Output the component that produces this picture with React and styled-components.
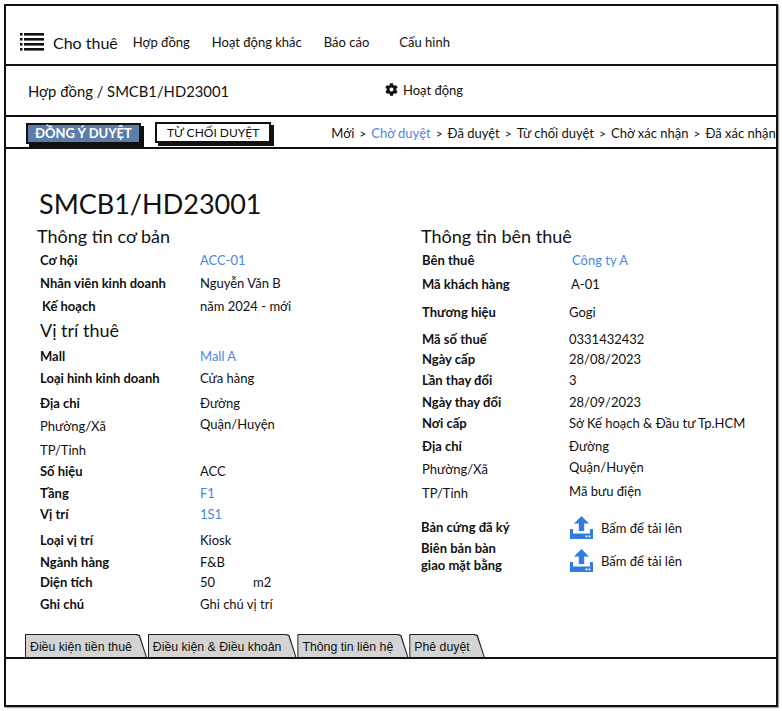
import styled, { createGlobalStyle } from 'styled-components';
import { FaCog } from 'react-icons/fa';

const GlobalStyle = createGlobalStyle`
  *, *::before, *::after { box-sizing: border-box; }
  body {
    margin: 0;
    background: #fff;
    color: #111;
    font-family: Lato, "Noto Sans", sans-serif;
  }
`;

const Frame = styled.div`
  margin: 4px;
  width: 774px;
  height: 703px;
  border: 2px solid #111;
  box-shadow: 1px 1px 1px rgba(0, 0, 0, 0.35);
  display: flex;
  flex-direction: column;
`;

// top menu
const NavBar = styled.nav`
  height: 60px;
  border-bottom: 2px solid #111;
  display: flex;
  align-items: center;
  padding: 14px 0 0 14px;
`;

const Brand = styled.div`
  display: flex;
  align-items: center;
  gap: 9px;
  font-size: 16px;
  margin-right: 15px;
`;

const NavLinks = styled.div`
  display: flex;
  gap: 22px;
  font-size: 13px;
`;

const NavLink = styled.span`
  margin-right: ${({ $extra }) => $extra || 0}px;
`;

// page title bar
const TitleBar = styled.div`
  height: 51px;
  border-bottom: 2px solid #111;
  display: grid;
  grid-template-columns: 357px auto;
  align-items: center;
  padding-left: 22px;
`;

const Crumb = styled.div`
  font-size: 14.8px;
`;

const Activity = styled.div`
  display: flex;
  align-items: center;
  gap: 5px;
  font-size: 13px;
  margin-top: -2px;
`;

// approve / reject + status flow
const ActionBar = styled.div`
  height: 32px;
  border-bottom: 2px solid #111;
  display: flex;
  align-items: center;
  padding-left: 20px;
`;

const Button = styled.button`
  height: 21px;
  padding: 0 ${({ $primary }) => ($primary ? 7 : 10)}px;
  border: 2px solid #111;
  box-shadow: 3px 3px 0 #111;
  background: ${({ $primary }) => ($primary ? '#5a7da9' : '#fff')};
  color: ${({ $primary }) => ($primary ? '#fff' : '#111')};
  font-family: Lato, "Noto Sans", sans-serif;
  font-size: ${({ $primary }) => ($primary ? 13 : 12)}px;
  font-weight: ${({ $primary }) => ($primary ? 700 : 400)};
  margin-right: ${({ $gap }) => $gap}px;
  margin-top: ${({ $primary }) => ($primary ? 2 : 0)}px;
  white-space: nowrap;
`;

const Flow = styled.div`
  display: flex;
  align-items: center;
  gap: 5px;
  font-size: 13px;
  white-space: nowrap;
  margin-top: 2px;
`;

const Step = styled.span`
  color: ${({ $active }) => ($active ? '#4b84e4' : '#111')};
`;

const Sep = styled.span`
  font-size: 12px;
`;

// main area
const Content = styled.div`
  flex: 1;
  display: flex;
  flex-direction: column;
  padding: 38px 0 0 31px;
`;

const DocTitle = styled.h1`
  margin: 0 0 0 2px;
  font-size: 27px;
  line-height: 34px;
  font-weight: 400;
`;

const Columns = styled.div`
  display: grid;
  grid-template-columns: 384px 1fr;
  margin-top: 2px;
`;

const Column = styled.div`
  display: flex;
  flex-direction: column;
`;

const Heading = styled.h2`
  margin: 0 0 0 ${({ $indent }) => $indent || 0}px;
  font-size: 18px;
  line-height: 26px;
  font-weight: 400;
`;

const Row = styled.div`
  display: grid;
  grid-template-columns: ${({ $labelW }) => $labelW}px 1fr;
  align-items: center;
  min-height: 22px;
  margin-top: ${({ $mt }) => $mt || 0}px;
  padding-left: ${({ $pad }) => $pad}px;
`;

const Label = styled.span`
  font-size: 13px;
  font-weight: ${({ $plain }) => ($plain ? 400 : 700)};
  line-height: 17px;
  margin-left: ${({ $indent }) => $indent || 0}px;
  white-space: pre-line;
`;

const Value = styled.span`
  font-size: 13px;
  color: ${({ $link }) => ($link ? '#4b84e4' : '#111')};
  margin-bottom: ${({ $lift }) => $lift || 0}px;
  margin-top: ${({ $drop }) => $drop || 0}px;
  display: flex;
  align-items: center;
  gap: 8px;
`;

const Unit = styled.span`
  margin-left: 30px;
`;

// tabs at the bottom
const Tabs = styled.div`
  margin-top: auto;
  margin-left: -12px;
  display: flex;
  align-items: flex-end;
`;

const tabShape = `polygon(0 0, calc(100% - 10px) 0, calc(100% - 7px) 1px, calc(100% - 6px) 4px, 100% 100%, 0 100%)`;

const Tab = styled.div`
  height: 23px;
  padding: 1px 1px 0 1px;
  background: #222;
  clip-path: ${tabShape};
  margin-right: 1px;
`;

const TabFace = styled.div`
  height: 100%;
  background: #d4d4d4;
  clip-path: ${tabShape};
  display: flex;
  align-items: center;
  padding: 1px 14px 0 4px;
  font-family: "Liberation Sans", Arial, sans-serif;
  font-size: 12.3px;
  white-space: nowrap;
`;

const TabPanel = styled.div`
  height: 48px;
  border-top: 2px solid #111;
`;

const MenuIcon = () => (
  <svg width="24" height="19" viewBox="0 0 24 19">
    {[0, 5, 10, 15].map((y) => (
      <g key={y} fill="#111">
        <rect x="0" y={y} width="2.5" height="2.6" />
        <rect x="4" y={y} width="20" height="2.6" />
      </g>
    ))}
  </svg>
);

const UploadIcon = () => (
  <svg width="23" height="23" viewBox="0 0 23 23">
    <path d="M11.5 0 L4 7.5 H8.8 V15 H14.2 V7.5 H19 Z" fill="#2f7de1" />
    <path d="M0 13 H3 V17.5 H20 V13 H23 V23 H0 Z" fill="#2f7de1" />
    <rect x="15.5" y="19.5" width="1.8" height="1.8" fill="#fff" />
    <rect x="18.5" y="19.5" width="1.8" height="1.8" fill="#fff" />
  </svg>
);

const basicInfo = [
  { label: 'Cơ hội', value: 'ACC-01', link: true },
  { label: 'Nhân viên kinh doanh', value: 'Nguyễn Văn B', mt: 1 },
  { label: 'Kế hoạch', value: 'năm 2024 - mới', mt: 1, indent: 2 },
];

const location = [
  { label: 'Mall', value: 'Mall A', link: true, mt: 2 },
  { label: 'Loại hình kinh doanh', value: 'Cửa hàng' },
  { label: 'Địa chỉ', value: 'Đường', mt: 3 },
  { label: 'Phường/Xã', value: 'Quận/Huyện', plain: true, mt: 1, lift: 4 },
  { label: 'TP/Tỉnh', value: '', plain: true, mt: 2 },
  { label: 'Số hiệu', value: 'ACC', mt: -1 },
  { label: 'Tầng', value: 'F1', link: true },
  { label: 'Vị trí', value: '1S1', link: true, mt: -1 },
  { label: 'Loại vị trí', value: 'Kiosk', mt: 4 },
  { label: 'Ngành hàng', value: 'F&B' },
  { label: 'Diện tích', value: '50', unit: 'm2', mt: -2 },
  { label: 'Ghi chú', value: 'Ghi chú vị trí' },
];

const tenant = [
  { label: 'Bên thuê', value: 'Công ty A', link: true, shift: 3 },
  { label: 'Mã khách hàng', value: 'A-01', mt: 2, shift: 2 },
  { label: 'Thương hiệu', value: 'Gogi', mt: 6 },
  { label: 'Mã số thuế', value: '0331432432', mt: 5 },
  { label: 'Ngày cấp', value: '28/08/2023', mt: -2 },
  { label: 'Lần thay đổi', value: '3', mt: -1 },
  { label: 'Ngày thay đổi', value: '28/09/2023' },
  { label: 'Nơi cấp', value: 'Sở Kế hoạch & Đầu tư Tp.HCM', mt: -1 },
  { label: 'Địa chỉ', value: 'Đường', mt: 1 },
  { label: 'Phường/Xã', value: 'Quận/Huyện', plain: true, mt: 1, lift: 5 },
  { label: 'TP/Tỉnh', value: 'Mã bưu điện', plain: true, mt: 2, lift: 4 },
];

const uploads = [
  { label: 'Bản cứng đã ký', mt: 12 },
  { label: 'Biên bản bàn\ngiao mặt bằng', mt: 1, drop: 7 },
];

const tabs = ['Điều kiện tiền thuê', 'Điều kiện & Điều khoản', 'Thông tin liên hệ', 'Phê duyệt'];

const steps = ['Mới', 'Chờ duyệt', 'Đã duyệt', 'Từ chối duyệt', 'Chờ xác nhận', 'Đã xác nhận'];

const InfoRow = ({ item, labelW, pad }) => (
  <Row $labelW={labelW} $pad={pad} $mt={item.mt}>
    <Label $plain={item.plain} $indent={item.indent}>{item.label}</Label>
    <Value $link={item.link} $lift={item.lift} style={item.shift ? { marginLeft: item.shift } : undefined}>
      {item.value}
      {item.unit && <Unit>{item.unit}</Unit>}
    </Value>
  </Row>
);

const App = () => (
  <>
    <GlobalStyle />
    <Frame>
      <NavBar>
        <Brand>
          <MenuIcon />
          Cho thuê
        </Brand>
        <NavLinks>
          <NavLink>Hợp đồng</NavLink>
          <NavLink>Hoạt động khác</NavLink>
          <NavLink $extra={8}>Báo cáo</NavLink>
          <NavLink>Cấu hình</NavLink>
        </NavLinks>
      </NavBar>

      <TitleBar>
        <Crumb>Hợp đồng / SMCB1/HD23001</Crumb>
        <Activity>
          <FaCog size={13} />
          Hoạt động
        </Activity>
      </TitleBar>

      <ActionBar>
        <Button $primary $gap={14}>ĐỒNG Ý DUYỆT</Button>
        <Button $gap={60}>TỪ CHỐI DUYỆT</Button>
        <Flow>
          {steps.map((s, i) => (
            <Step key={s} $active={s === 'Chờ duyệt'}>
              {i > 0 && <Sep style={{ color: '#111', marginRight: 5 }}>&gt;</Sep>}
              {s}
            </Step>
          ))}
        </Flow>
      </ActionBar>

      <Content>
        <DocTitle>SMCB1/HD23001</DocTitle>
        <Columns>
          <Column>
            <Heading>Thông tin cơ bản</Heading>
            {basicInfo.map((item) => (
              <InfoRow key={item.label} item={item} labelW={160} pad={3} />
            ))}
            <Heading $indent={3}>Vị trí thuê</Heading>
            {location.map((item) => (
              <InfoRow key={item.label} item={item} labelW={160} pad={3} />
            ))}
          </Column>
          <Column>
            <Heading>Thông tin bên thuê</Heading>
            {tenant.map((item) => (
              <InfoRow key={item.label} item={item} labelW={147} pad={1} />
            ))}
            {uploads.map((u) => (
              <Row key={u.label} $labelW={149} $pad={0} $mt={u.mt}>
                <Label>{u.label}</Label>
                <Value $drop={u.drop}>
                  <UploadIcon />
                  Bấm để tải lên
                </Value>
              </Row>
            ))}
          </Column>
        </Columns>
        <Tabs>
          {tabs.map((t) => (
            <Tab key={t}>
              <TabFace>{t}</TabFace>
            </Tab>
          ))}
        </Tabs>
      </Content>

      <TabPanel />
    </Frame>
  </>
);

export default App;
